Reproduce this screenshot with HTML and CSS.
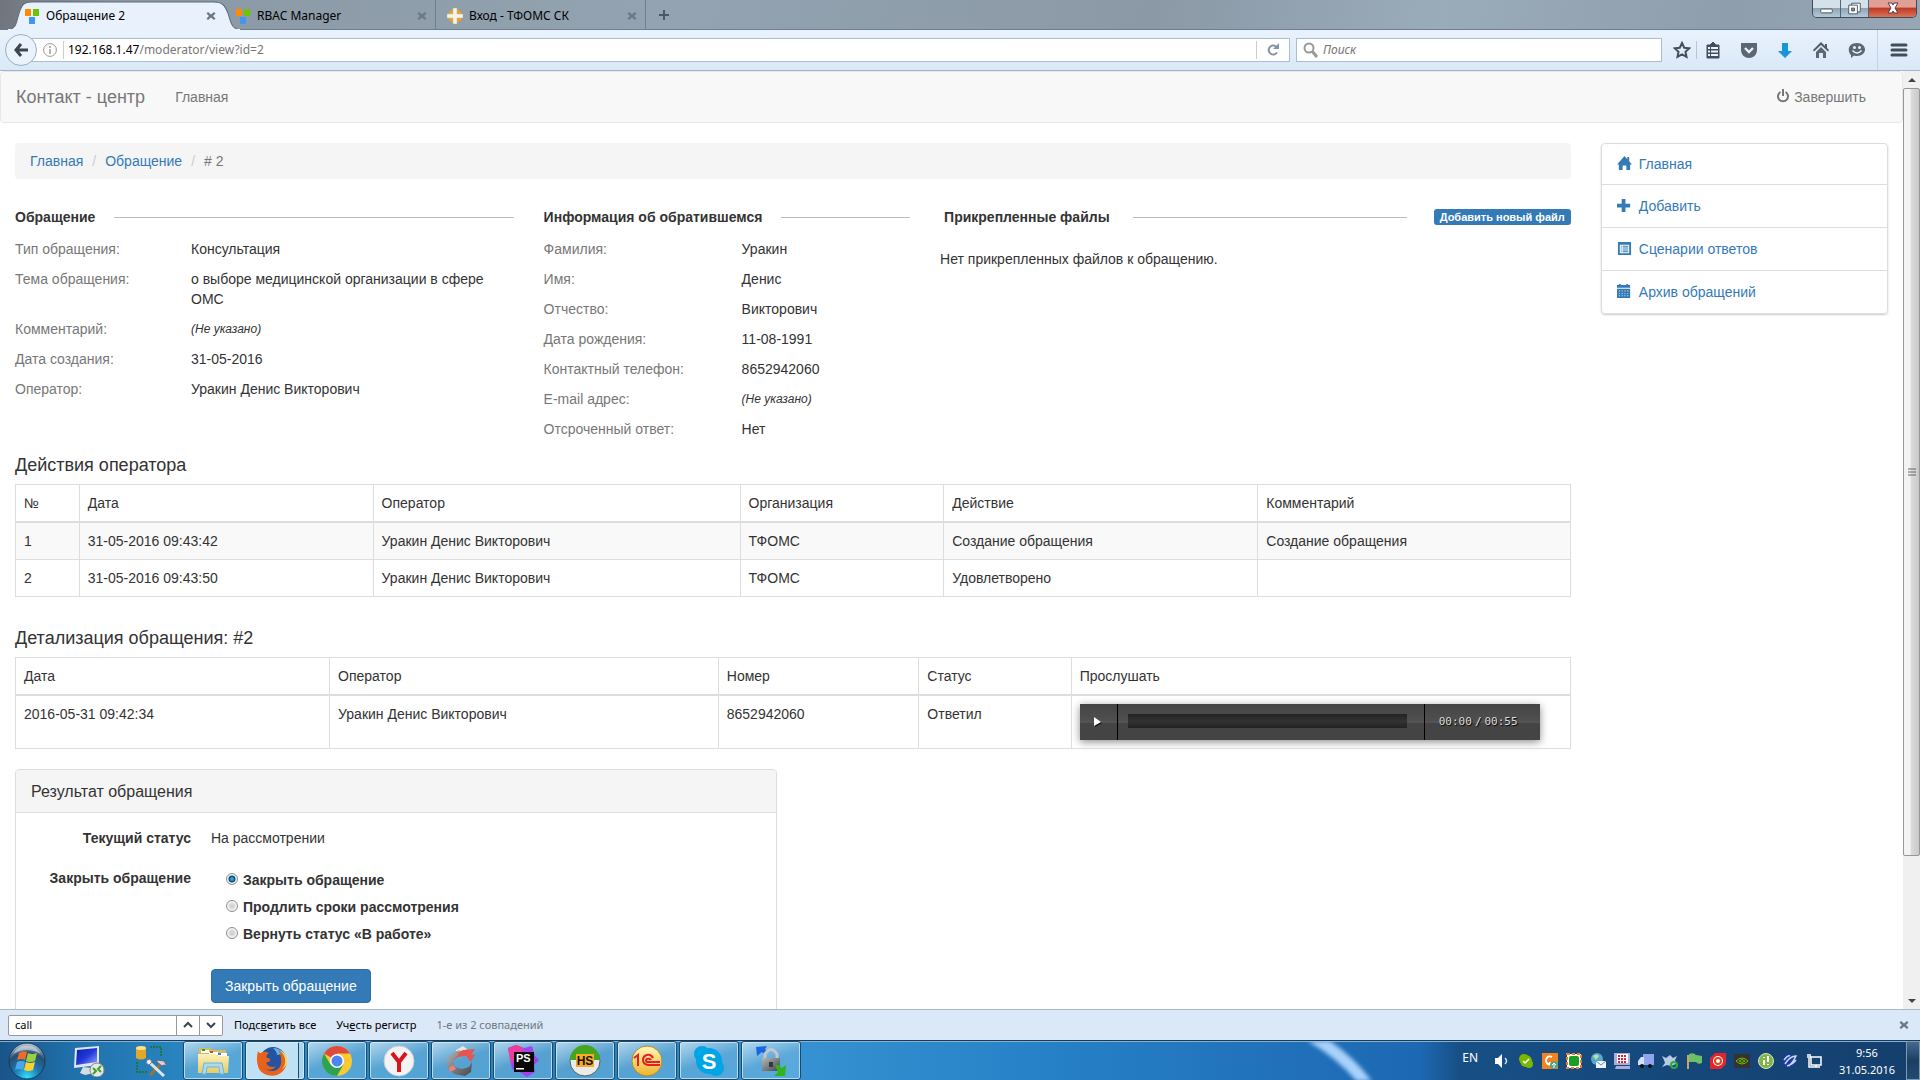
FILE: index.html
```html
<!DOCTYPE html>
<html lang="ru">
<head>
<meta charset="utf-8">
<title>Обращение 2</title>
<link rel="stylesheet" href="styles.css">
</head>
<body>
<svg class="defs" width="0" height="0" aria-hidden="true">
  <defs>
    <linearGradient id="gold" x1="0" y1="0" x2="0" y2="1"><stop offset="0" stop-color="#fff7b8"/><stop offset="1" stop-color="#f0b429"/></linearGradient>
    <linearGradient id="metal" x1="0" y1="0" x2="1" y2="1"><stop offset="0" stop-color="#b5b8ba"/><stop offset="1" stop-color="#42474a"/></linearGradient>
    <radialGradient id="orb" cx=".5" cy=".95" r=".9"><stop offset="0" stop-color="#35e0ff"/><stop offset=".4" stop-color="#1b78b0"/><stop offset=".75" stop-color="#274e70"/><stop offset="1" stop-color="#a9bccb"/></radialGradient>
    <linearGradient id="screen" x1="0" y1="0" x2="1" y2="1"><stop offset="0" stop-color="#0b1ea8"/><stop offset=".5" stop-color="#2238d8"/><stop offset="1" stop-color="#8fa8ff"/></linearGradient>
    <linearGradient id="folder" x1="0" y1="0" x2="0" y2="1"><stop offset="0" stop-color="#fbf2b8"/><stop offset="1" stop-color="#e6cb68"/></linearGradient>
    <symbol id="yii" viewBox="0 0 16 16"><path fill="#ff8a00" d="M1 1h6v7H1z"/><path fill="#6fc400" d="M9 1h6v7H9z"/><path fill="#3f97f0" d="M5 9h6v7H5z"/></symbol>
    <symbol id="cross" viewBox="0 0 10 10"><path d="M2 1 5 3.500 8 1l1.500 1.500L7 5l2.500 2.500L8 9 5 6.500 2 9 .5 7.500 3 5 .5 2.500z" fill="#6b7986"/></symbol>
  </defs>
</svg>

<header class="tabs">
  <div class="tab tab-active">
    <svg class="tab-shape" viewBox="0 0 232 30" preserveAspectRatio="none"><path d="M0 30C10 29 9 22 12 13 15 4 17 2 25 2H205c8 0 11 3 14 11 3 9 3 16 13 17z" fill="#e9f2fc" stroke="#5c6d7b"/><path d="M1 30h230" stroke="#e9f2fc" stroke-width="2"/></svg>
    <svg class="fav" viewBox="0 0 16 16"><use href="#yii"/></svg><span>Обращение 2</span><button class="x" aria-label="Закрыть вкладку"><svg viewBox="0 0 10 10"><use href="#cross"/></svg></button>
  </div>
  <div class="tab">
    <svg class="fav" viewBox="0 0 16 16"><use href="#yii"/></svg><span>RBAC Manager</span><button class="x" aria-label="Закрыть вкладку"><svg viewBox="0 0 10 10"><use href="#cross"/></svg></button>
  </div>
  <div class="tab">
    <svg class="fav" viewBox="0 0 16 16"><circle cx="8" cy="8" r="7" fill="#f0a21e"/><path d="M6 0h4v6h6v4h-6v6H6v-6H0V6h6z" fill="#f5f3ea" stroke="#b9b4a6" stroke-width=".5"/></svg><span>Вход - ТФОМС СК</span><button class="x" aria-label="Закрыть вкладку"><svg viewBox="0 0 10 10"><use href="#cross"/></svg></button>
  </div>
  <button class="new-tab" aria-label="Новая вкладка"><svg viewBox="0 0 12 12"><path d="M6 1v10M1 6h10" stroke="#4a5865" stroke-width="2"/></svg></button>
  <div class="win">
    <button class="wb" aria-label="Свернуть"><svg viewBox="0 0 28 18"><rect x="8" y="9" width="12" height="4" rx="1" fill="#fff" stroke="#4d5967"/></svg></button>
    <button class="wb" aria-label="Восстановить"><svg viewBox="0 0 28 18"><path d="M11 3h9v9h-9z" fill="#fff" stroke="#4d5967"/><path d="M8 5h9v9H8z" fill="#fff" stroke="#4d5967"/><path d="M11 8h3v3h-3z" fill="#7e93a6" stroke="#4d5967"/></svg></button>
    <button class="wb wb-close" aria-label="Закрыть"><svg viewBox="0 0 28 18"><path d="M9 3h4l1 2 1-2h4l-3 5 3 5h-4l-1-2-1 2H9l3-5z" fill="#fff" stroke="#553d42"/></svg></button>
  </div>
</header>

<div class="toolbar">
  <button class="back" aria-label="Назад"><svg viewBox="0 0 16 16"><path d="M8 2 3 8l5 6M3 8h12" fill="none" stroke="#3c4650" stroke-width="3"/></svg></button>
  <div class="url">
    <svg class="info" viewBox="0 0 14 14"><circle cx="7" cy="7" r="6.400" fill="none" stroke="#999"/><path d="M7 6v5M7 3v2" stroke="#999" stroke-width="1.500"/></svg>
    <i class="vline"></i>
    <span class="addr"><b>192.168.1.47</b>/moderator/view?id=2</span>
    <i class="vline"></i>
    <button class="reload" aria-label="Обновить"><svg viewBox="0 0 14 14"><path d="M11 9.500A4.500 4.500 0 1 1 10 3.500" fill="none" stroke="#8795a1" stroke-width="2"/><path d="M7 6h6V0z" fill="#8795a1"/></svg></button>
  </div>
  <div class="search">
    <svg viewBox="0 0 16 16"><circle cx="6" cy="6" r="4.500" fill="none" stroke="#999" stroke-width="2"/><path d="m9 9 5 6" stroke="#999" stroke-width="3"/></svg>
    <input type="text" placeholder="Поиск" aria-label="Поиск">
  </div>
  <div class="tools">
    <button class="tool" aria-label="Закладка"><svg viewBox="0 0 18 18"><path d="m9 2 2.200 4.700 5 .6-3.700 3.500 1 5L9 13.400l-4.500 2.400 1-5L1.800 7.300l5-.6z" fill="none" stroke="#424f5a" stroke-width="2"/></svg></button>
    <i class="tool-sep"></i>
    <button class="tool" aria-label="Меню закладок"><svg viewBox="0 0 18 18"><path d="M3 4h3l3-3 3 3h3v13H3z" fill="#424f5a" stroke="#424f5a" stroke-linejoin="round"/><path d="M4 7h2M7 7h7M4 10.500h2M7 10.500h7M4 14h2M7 14h7" stroke="#e9f2fc" stroke-width="2"/></svg></button>
    <button class="tool" aria-label="Pocket"><svg viewBox="0 0 18 18"><path d="M1 2h16v7c0 5-4 8-8 8s-8-3-8-8z" fill="#5b6772"/><path d="m5 7 4 4 4-4" fill="none" stroke="#e9f2fc" stroke-width="2.400"/></svg></button>
    <button class="tool" aria-label="Загрузки"><svg viewBox="0 0 18 18"><path d="M6 2h6v8h4l-7 7-7-7h4z" fill="#1694dc"/></svg></button>
    <button class="tool" aria-label="Домой"><svg viewBox="0 0 18 18"><path d="M9 1 1 9l1 1.500L9 4l7 6.500L17 9l-2-2V3h-2v2z" fill="#4f5c68"/><path d="m9 6 5 5v6h-3v-5H7v5H4v-6z" fill="#5b6772"/></svg></button>
    <button class="tool" aria-label="Чат"><svg viewBox="0 0 18 18"><path d="M9 2c5 0 8 3 8 6.500S14 15 9 15c-1 0-2 0-3-.5L3 17v-3C-1 10 0 2 9 2z" fill="#5b6772"/><path d="M4.500 9.500q4.500 5 9 0" fill="none" stroke="#e9f2fc" stroke-width="1.500"/><circle cx="6.500" cy="6.500" r="1.500" fill="#e9f2fc"/><circle cx="11.500" cy="6.500" r="1.500" fill="#e9f2fc"/></svg></button>
    <button class="tool menu" aria-label="Меню"><svg viewBox="0 0 18 18"><path d="M2 4h14M2 9h14M2 14h14" stroke="#424f5a" stroke-width="3" stroke-linecap="round"/></svg></button>
  </div>
</div>

<div class="viewport">
  <div class="page">
    <nav class="navbar">
      <a class="brand" href="#">Контакт - центр</a>
      <a class="nav-link" href="#">Главная</a>
      <a class="nav-link logout" href="#"><svg viewBox="0 0 14 14"><path d="M4.500 3A5 5 0 1 0 9.500 3M7 0v7" fill="none" stroke="currentColor" stroke-width="2"/></svg> Завершить</a>
    </nav>
    <div class="layout">
      <main>
        <ol class="crumbs"><li><a href="#">Главная</a></li><li><a href="#">Обращение</a></li><li># 2</li></ol>
        <div class="sections">
          <section>
            <h4 class="legend"><span>Обращение</span></h4>
            <dl class="facts facts-third">
              <dt>Тип обращения:</dt><dd>Консультация</dd>
              <dt>Тема обращения:</dt><dd>о выборе медицинской организации в сфере ОМС</dd>
              <dt>Комментарий:</dt><dd class="none">(Не указано)</dd>
              <dt>Дата создания:</dt><dd>31-05-2016</dd>
              <dt>Оператор:</dt><dd>Уракин Денис Викторович</dd>
            </dl>
          </section>
          <section>
            <h4 class="legend"><span>Информация об обратившемся</span></h4>
            <dl class="facts facts-half">
              <dt>Фамилия:</dt><dd>Уракин</dd>
              <dt>Имя:</dt><dd>Денис</dd>
              <dt>Отчество:</dt><dd>Викторович</dd>
              <dt>Дата рождения:</dt><dd>11-08-1991</dd>
              <dt>Контактный телефон:</dt><dd>8652942060</dd>
              <dt>E-mail адрес:</dt><dd class="none">(Не указано)</dd>
              <dt>Отсроченный ответ:</dt><dd>Нет</dd>
            </dl>
          </section>
          <section>
            <div class="files-head"><h4 class="legend"><span>Прикрепленные файлы</span></h4><a class="badge" href="#">Добавить новый файл</a></div>
            <p class="files">Нет прикрепленных файлов к обращению.</p>
          </section>
        </div>

        <h3 class="title">Действия оператора</h3>
        <table class="grid striped">
          <colgroup><col class="a1"><col class="a2"><col class="a3"><col class="a4"><col class="a5"><col></colgroup>
          <thead><tr><th>№</th><th>Дата</th><th>Оператор</th><th>Организация</th><th>Действие</th><th>Комментарий</th></tr></thead>
          <tbody>
            <tr><td>1</td><td>31-05-2016 09:43:42</td><td>Уракин Денис Викторович</td><td>ТФОМС</td><td>Создание обращения</td><td>Создание обращения</td></tr>
            <tr><td>2</td><td>31-05-2016 09:43:50</td><td>Уракин Денис Викторович</td><td>ТФОМС</td><td>Удовлетворено</td><td></td></tr>
          </tbody>
        </table>

        <h3 class="title title-next">Детализация обращения: #2</h3>
        <table class="grid">
          <colgroup><col class="b1"><col class="b2"><col class="b3"><col class="b4"><col></colgroup>
          <thead><tr><th>Дата</th><th>Оператор</th><th>Номер</th><th>Статус</th><th>Прослушать</th></tr></thead>
          <tbody><tr><td>2016-05-31 09:42:34</td><td>Уракин Денис Викторович</td><td>8652942060</td><td>Ответил</td>
            <td><div class="player">
              <button class="play" aria-label="Воспроизвести"><svg viewBox="0 0 8 10"><path d="m1 2 7 4-7 4z" fill="#111"/><path d="m0 0 7 5-7 4z" fill="#fff"/></svg></button>
              <div class="seek"><i></i></div>
              <div class="time"><span>00:00</span><span>/</span><span>00:55</span></div>
            </div></td></tr></tbody>
        </table>

        <form class="panel">
          <div class="panel-head">Результат обращения</div>
          <div class="panel-body">
            <b class="lab">Текущий статус</b><span>На рассмотрении</span>
            <b class="lab">Закрыть обращение</b>
            <div class="radios">
              <label><input type="radio" name="r" checked>Закрыть обращение</label>
              <label><input type="radio" name="r">Продлить сроки рассмотрения</label>
              <label><input type="radio" name="r">Вернуть статус «В работе»</label>
            </div>
            <button class="primary" type="button">Закрыть обращение</button>
          </div>
        </form>
      </main>
      <aside>
        <ul class="side">
          <li><a href="#"><svg viewBox="0 0 16 16"><path d="M8 0 0 9h2v6h4v-5h4v5h4V9h2l-3-3.500V1h-2v2.500z" fill="currentColor"/></svg>Главная</a></li>
          <li><a href="#"><svg viewBox="0 0 16 16"><path d="M5 1h4v5h5v4H9v5H5v-5H0V6h5z" fill="currentColor"/></svg>Добавить</a></li>
          <li><a href="#"><svg viewBox="0 0 16 16"><path d="M1 1h14v14H1zM3 4v9h10V4zM4 5h1v1H4zm2 0h6v1H6zM4 7h1v1H4zm2 0h6v1H6zM4 9h1v1H4zm2 0h6v1H6zm-2 2h1v1H4zm2 0h6v1H6z" fill="currentColor" fill-rule="evenodd"/></svg>Сценарии ответов</a></li>
          <li><a href="#"><svg viewBox="0 0 16 16"><path d="M0 1h2V0h2v1h6V0h2v1h2v3H0zM0 5h14v10H0zM2 7v1h1V7zm3 0v1h1V7zm3 0v1h1V7zm3 0v1h1V7zM2 9.500v1h1v-1zm3 0v1h1v-1zm3 0v1h1v-1zm3 0v1h1v-1zM2 12v1h1v-1zm3 0v1h1v-1zm3 0v1h1v-1zm3 0v1h1v-1z" fill="currentColor" fill-rule="evenodd"/></svg>Архив обращений</a></li>
        </ul>
      </aside>
    </div>
  </div>
  <div class="scroll">
    <svg class="arrow" viewBox="0 0 17 17"><path d="m5 11 4-4 4 4z" fill="#444"/></svg>
    <div class="track"><div class="thumb"><svg viewBox="0 0 8 8"><path d="M0 1h8M0 4h8M0 7h8" stroke="#666"/></svg></div></div>
    <svg class="arrow" viewBox="0 0 17 17"><path d="m5 7 4 4 4-4z" fill="#444"/></svg>
  </div>
</div>

<div class="find">
  <div class="find-box">
    <input type="text" value="call" aria-label="Найти на странице">
    <button aria-label="Предыдущее"><svg viewBox="0 0 10 10"><path d="m1 7 4-4 4 4" fill="none" stroke="#3c4650" stroke-width="2"/></svg></button>
    <button aria-label="Следующее"><svg viewBox="0 0 10 10"><path d="m1 3 4 4 4-4" fill="none" stroke="#3c4650" stroke-width="2"/></svg></button>
  </div>
  <button class="find-opt"><span>Подс<u>в</u>етить все</span></button>
  <button class="find-opt"><span>Уч<u>е</u>сть регистр</span></button>
  <span class="found">1-е из 2 совпадений</span>
  <button class="x find-close" aria-label="Закрыть поиск"><svg viewBox="0 0 10 10"><use href="#cross"/></svg></button>
</div>

<footer class="taskbar">
  <svg class="streak" viewBox="0 0 100 40"><path d="M5-5Q40 15 62 45" fill="none" stroke="#a9d2fb" stroke-width="12"/></svg>
  <button class="pin start" aria-label="Пуск"><svg viewBox="0 0 38 38"><circle cx="19" cy="19" r="18" fill="url(#orb)" stroke="#173b5b"/><path d="M11 11q4-3 8-1l-2 8q-4-2-8 0z" fill="#f06a2a"/><path d="M20 11q4 2 9 0l-2 8q-5 2-9 0z" fill="#9bcf3c"/><path d="M9 20q4-2 8 0l-2 8q-4-2-8 0z" fill="#4aa8ea"/><path d="M18 20q4 2 9 0l-2 8q-5 2-9 0z" fill="#ffd02e"/><path d="M5 12a16 16 0 0 1 28 0Q19 4 5 12z" fill="#fff" opacity=".45"/></svg></button>
  <button class="pin" aria-label="Удалённый рабочий стол"><svg viewBox="0 0 32 32"><path d="m10 22 9 1 2 5-9 2-5-2z" fill="#d7dde2"/><path d="M2 3 26 1v19L1 23z" fill="#dfe6ec"/><path d="m4 5 20-2v14L3 20z" fill="url(#screen)"/><circle cx="24" cy="25" r="7" fill="#e6e8ea" stroke="#888"/><path d="m20 23 3 3-3 3M28 21l-3 3 3 3" fill="none" stroke="#37a522" stroke-width="2"/></svg></button>
  <button class="pin" aria-label="Средства разработки"><svg viewBox="0 0 32 32"><path d="M1 3v10q5 3 10 0V3z" fill="#e2a928"/><ellipse cx="6" cy="3" rx="5" ry="2" fill="#ffe08a"/><path d="M15 2h11v10M2 17v10h11" fill="none" stroke="#17780d" stroke-width="1.500" stroke-dasharray="2 1"/><path d="m15 30 13-13" stroke="#9c7330" stroke-width="3"/><path d="m22 15 7 1 3 5-3-1-2 1-5-4z" fill="#cfd5da" stroke="#667"/><path d="m13 16 16 15" stroke="#dfe3e6" stroke-width="3"/><path d="m11 18 1-3 3-1 2 3-3 3z" fill="#eef" stroke="#778"/></svg></button>
  <button class="task" aria-label="Проводник"><svg viewBox="0 0 32 32"><path d="M2 3h11l2 2h14v22H2z" fill="#d9bc5a"/><path d="M4 5h8v3H4z" fill="#fff"/><path d="M5 4h3v2H5z" fill="#22a33a"/><path d="M12 7h9v3h-9z" fill="#fff"/><path d="M13 6h3v2h-3z" fill="#d8482e"/><path d="M1 9h18l2 2h11l-1 17H1z" fill="url(#folder)"/><path d="M21 8h9v3h-9z" fill="#fff"/><path d="M21 8h3v2h-3z" fill="#2587df"/><path d="M5 29 7 18h18l2 11h-4l-1-7H10l-1 7z" fill="#a9dbf2" stroke="#71b1d3"/></svg></button>
  <button class="task task-stack" aria-label="Firefox"><svg viewBox="0 0 32 32"><circle cx="17" cy="15" r="13" fill="#24539f"/><path d="M17 3c7 0 11 5 11 9-2-3-5-3-7-2 0-3-2-5-4-7z" fill="#5ab7e6"/><path d="M2 6c1 2 2 2 3 2 3-2 6-1 8 0-2 1-3 3-2 5 2 0 4 1 3 3-1 1-3 1-4 2 2 4 7 5 10 3-2 4-8 5-11 2 5 6 18 3 16-9 0-3-1-6-3-9 9 5 11 15 5 21-6 7-19 6-24-2C1 19 0 13 2 6z" fill="#e8621b"/><path d="M24 5c6 6 7 14 2 19 7-3 7-14-2-19z" fill="#ffd84a"/></svg></button>
  <button class="task" aria-label="Chrome"><svg viewBox="0 0 32 32"><circle cx="16" cy="16" r="15" fill="#fbc932"/><path d="M16 16 3 8.500A15 15 0 0 1 29 8.500H16z" fill="#dc4b3e"/><path d="M3 8.500A15 15 0 0 0 16 31l6.500-11.500L16 16 9.500 19.500z" fill="#2da253"/><circle cx="16" cy="16" r="7" fill="#fff"/><circle cx="16" cy="16" r="5.500" fill="#4a86ee"/></svg></button>
  <button class="task" aria-label="Яндекс"><svg viewBox="0 0 32 32"><circle cx="16" cy="16" r="15" fill="#f3f3f3" stroke="#c9cfd3"/><path d="m9 8 7 9 7-9M16 16v11" fill="none" stroke="#d8141c" stroke-width="4"/></svg></button>
  <button class="task" aria-label="Clarify"><svg viewBox="0 0 32 32"><path d="m11 5 7-4 4 3-4 6-8 1z" fill="#e9e6e6"/><path d="m9 9 9-4 12-1-4 6 4-1-4 8-5-6-8 1-5 4z" fill="#e4564f"/><path d="m9 7 6-2-2 5-5 6 2 6 7 2 7-2 3-5-1 10-6 4-11-2-6-6-2-8z" fill="url(#metal)"/><path d="m4 23 4-3 3 4-6 3z" fill="#ef7f78"/></svg></button>
  <button class="task" aria-label="PhpStorm"><svg viewBox="0 0 32 32"><path d="M1 3 9 0l8 3 8-2 3 10 4 4-5 5 1 7-8 5-9-6-6-2z" fill="#a042ed"/><path d="M1 3 9 0l8 3-13 16z" fill="#ef3c9c"/><path d="M7 7h20v20H7z" fill="#080808"/><text x="9" y="17" class="logo-ps">PS</text><path d="M9 23h8v1.500H9z" fill="#fff"/></svg></button>
  <button class="task" aria-label="HeidiSQL"><svg viewBox="0 0 32 32"><circle cx="16" cy="16" r="15" fill="#e8ece8" stroke="#56645a"/><path d="M1 15a15 15 0 0 1 30 0z" fill="#46a51c"/><path d="M7 9h18v13H7z" fill="#f8aa28"/><text x="16" y="20" class="logo-hs">HS</text></svg></button>
  <button class="task" aria-label="1С"><svg viewBox="0 0 32 32"><circle cx="16" cy="16" r="15" fill="url(#gold)" stroke="#b08a31"/><path d="m3 13 4-3v11M22 13q-2-4-6-3-4 1-4 5t5 5h12M20 15q-1-2-4-1-2 2 0 3h13" fill="none" stroke="#e5202b" stroke-width="2"/></svg></button>
  <button class="task" aria-label="Skype"><svg viewBox="0 0 32 32"><circle cx="16" cy="16" r="13" fill="#00a5e5"/><circle cx="9" cy="9" r="8" fill="#00a5e5"/><circle cx="23" cy="23" r="8" fill="#00a5e5"/><text x="16" y="24" class="logo-s">S</text></svg></button>
  <button class="task" aria-label="WinSCP"><svg viewBox="0 0 32 32"><path d="M1 2 12 1l-2 3 3 3-3 3-3-3-5 4z" fill="#1768df"/><path d="M10 15V9q6-9 12 0v6" fill="none" stroke="#c4c8ca" stroke-width="3"/><path d="M7 13h18v13H7z" fill="url(#metal)"/><path d="M14 17h4v5h-4z" fill="#33383b"/><path d="M20 20h4l3 3 4-3-1 11H19l4-4z" fill="#2eb51d"/></svg></button>
  <div class="tray">
    <span class="lang">EN</span>
    <svg viewBox="0 0 16 16"><path d="M1 5h3l4-4v14l-4-4H1z" fill="#fff"/><path d="M11 5q3 3 0 6" fill="none" stroke="#cfe0ee" stroke-width="1.500"/></svg>
    <svg viewBox="0 0 16 16"><circle cx="6" cy="6" r="5" fill="#7ab800"/><circle cx="8" cy="8" r="6" fill="#7ab800"/><circle cx="11" cy="11" r="4" fill="#7ab800"/><path d="m5 8 2 2 4-4" fill="none" stroke="#fff" stroke-width="1.500"/></svg>
    <svg viewBox="0 0 16 16"><path d="M0 0h16v16H0z" fill="#f58220"/><path d="M10 4a4 4 0 1 0 1 6H7" fill="none" stroke="#fff" stroke-width="2"/><circle cx="12" cy="12" r="4" fill="#5aa57c"/><path d="M12 15v-4m-2 1 2-2 2 2" fill="none" stroke="#fff"/></svg>
    <svg viewBox="0 0 16 16"><path d="M1 1h14v14H1z" fill="#fff" stroke="#ef7c22" stroke-width="2" stroke-dasharray="3 2"/><rect x="3" y="3" width="10" height="10" rx="2" fill="#1a9c26"/></svg>
    <svg viewBox="0 0 16 16"><circle cx="7" cy="6" r="6" fill="#58a9cc"/><path d="M3 3q4-3 6 0L6 7z" fill="#b9e2a9"/><path d="M6 8h10v7H6z" fill="#eef5fb"/><path d="m6 8 5 4 5-4" fill="none" stroke="#5b94c7"/></svg>
    <svg viewBox="0 0 16 16"><path d="M0 0h16v12H0zM2 13h14v3H1z" fill="#a9afd9"/><path d="M3 1h11v9H3z" fill="#fff"/><path d="M4 3h9M4 6h9M4 9h9" stroke="#d3243a" stroke-width="2" stroke-dasharray="2 1"/></svg>
    <svg viewBox="0 0 16 16"><path d="M5 1h11v11H5z" fill="#8fa4ef"/><path d="M0 8l3-4h3v8H0z" fill="#d7def8"/><circle cx="4" cy="13" r="2" fill="#111"/><circle cx="12" cy="13" r="2" fill="#111"/></svg>
    <svg viewBox="0 0 16 16"><path d="m0 3 4 2 4-3 3 3 4-2-2 4 1 4-5 2-4-1-5 2 3-4-1-3z" fill="#b9cbe3"/><circle cx="12" cy="12" r="3" fill="none" stroke="#2fac34" stroke-width="2"/></svg>
    <svg viewBox="0 0 16 16"><path d="M1 2h2v14H1z" fill="#c9a36a"/><path d="M3 1q5-2 7 1l6 1v7q-4 2-6-1H3z" fill="#6cc067"/></svg>
    <svg viewBox="0 0 16 16"><path d="M5 0h11v11l-5 5H0V5z" fill="#e1252b"/><circle cx="8" cy="8" r="5" fill="#fff"/><circle cx="8" cy="8" r="3" fill="none" stroke="#e1461f" stroke-width="2"/></svg>
    <svg viewBox="0 0 16 16"><path d="M0 1h16v14H0z" fill="#333"/><path d="M2 8q6-6 12 0-6 6-12 0zm3 0q3-3 6 0-3 3-6 0z" fill="none" stroke="#77b900"/></svg>
    <svg viewBox="0 0 16 16"><circle cx="8" cy="8" r="7.500" fill="#7fb545" stroke="#dbe7c8"/><path d="M6 7v5M10 3v6M6 4v1M10 11v1" stroke="#fff" stroke-width="2"/></svg>
    <svg viewBox="0 0 16 16"><circle cx="7" cy="8" r="7" fill="#1c3b9d"/><path d="M2 7q4-5 6-4M3 11q5-8 11-8-2 5-7 10M5 13q6-2 9-6" fill="none" stroke="#c9d7f2" stroke-width="1.500"/></svg>
    <svg viewBox="0 0 16 16"><path d="M5 4h10v8H5zM6 14h8M10 12v2M2 1v4m2-4v4M3 5v9h3" fill="none" stroke="#fff" stroke-width="1.500"/></svg>
  </div>
  <div class="clock"><span>9:56</span><span>31.05.2016</span></div>
  <button class="desk" aria-label="Свернуть все окна"></button>
</footer>
</body>
</html>
```

FILE: styles.css
```css
* { box-sizing: border-box; }
body { margin: 0; height: 100vh; display: flex; flex-direction: column; overflow: hidden; font: 14px/20px "Liberation Sans", Arial, sans-serif; color: #333; background: #fff; }
button, input { font: inherit; color: inherit; margin: 0; }
button { border: 0; padding: 0; background: none; display: flex; align-items: center; justify-content: center; }
a { color: #337ab7; text-decoration: none; }
.defs { position: absolute; }
.tabs, .toolbar, .find { font: 12px/16px "Noto Sans", "Open Sans", sans-serif; color: #000; }

/* Browser frame */
.tabs { display: flex; flex: none; height: 30px; padding-left: 13px; background: linear-gradient(100deg, #70757c 0, #8a98a4 6%, #94a3b1 35%, #8b99a6 60%, #9aabba 75%, #8f9eac 90%, #98a7b5 100%); border-bottom: 1px solid #6b7f90; }
.tab { position: relative; flex: 0 1 211px; display: flex; align-items: center; padding: 2px 6px 0 11px; gap: 6px; }
.tab span { flex: 1; white-space: nowrap; position: relative; }
.tab .fav { width: 16px; height: 16px; position: relative; }
.tab + .tab:not(:nth-child(2)) { border-left: 1px solid #6f7f8d; }
.tab:nth-child(3) { border-right: 1px solid #6f7f8d; }
.tab-shape { position: absolute; left: -6px; top: 0; width: 234px; height: 30px; }
.x { width: 14px; height: 14px; position: relative; }
.x svg { width: 10px; height: 10px; }
.new-tab { width: 36px; }
.new-tab svg { width: 12px; height: 12px; }
.win { display: flex; margin-left: auto; margin-right: 3px; height: 18px; border: 1px solid #3f4b57; border-top: 0; border-radius: 0 0 5px 5px; overflow: hidden; }
.wb { width: 28px; background: linear-gradient(#d4e0ea 45%, #8fa5b7 50%, #b5c9d8); border-right: 1px solid #56646f; }
.wb svg { width: 28px; height: 18px; }
.wb-close { width: 47px; border: 0; background: linear-gradient(#e0a095 40%, #c13a26 50%, #d9745c); }
.toolbar { display: flex; flex: none; align-items: center; height: 41px; padding: 0 5px; background: linear-gradient(#e9f2fc, #dae8f8); border-bottom: 1px solid #9fb6cd; }
.back { position: relative; z-index: 1; width: 32px; height: 32px; margin-right: -8px; border: 1px solid #9aafc4; border-radius: 50%; background: #eaf2fb; }
.back svg { width: 16px; height: 16px; }
.url, .search { display: flex; align-items: center; height: 24px; background: #fff; border: 1px solid #a9bed3; }
.url { flex: 1; padding-left: 13px; }
.info { width: 14px; height: 14px; margin-right: 6px; }
.vline { width: 1px; height: 18px; background: #ccc; }
.addr { flex: 1; padding-left: 4px; color: #777; }
.addr b { font-weight: 400; color: #000; }
.reload { width: 32px; }
.reload svg { width: 14px; height: 14px; }
.search { flex: 0 1 366px; margin-left: 6px; padding-left: 6px; gap: 4px; }
.search svg { width: 16px; height: 16px; }
.search input { flex: 1; min-width: 0; border: 0; padding: 0; background: none; outline: 0; }
.search input::placeholder { color: #757575; font-style: italic; opacity: 1; }
.tools { display: flex; align-items: center; margin-left: 8px; }
.tool { width: 36px; height: 40px; flex: none; }
.tool svg { width: 18px; height: 18px; }
.tool:first-child { width: 24px; }
.tool-sep { width: 1px; height: 18px; margin-left: 2px; background: #b3c5d6; }
.tool-sep + .tool { margin-left: -2px; }
.menu { width: 43px; margin-left: 2px; margin-right: -5px; border-left: 1px solid #c3d3e3; }

/* Application page */
.viewport { flex: 1; min-height: 0; display: flex; overflow: hidden; }
.page { flex: 1; min-width: 0; overflow: hidden; }
.navbar { display: flex; align-items: center; height: 52px; margin-bottom: 20px; padding: 0 36px 0 15px; background: #f8f8f8; border: 1px solid #e7e7e7; border-radius: 4px; }
.navbar a { color: #777; }
.brand { font-size: 18px; margin-right: 30px; }
.logout { margin-left: auto; }
.logout svg { width: 14px; height: 14px; vertical-align: -1px; }
.layout { display: grid; grid-template-columns: 5fr 1fr; align-items: start; }
main, aside { padding: 0 15px; min-width: 0; }
.crumbs { display: flex; list-style: none; margin: 0 0 28px; padding: 8px 15px; background: #f5f5f5; border-radius: 4px; color: #777; }
.crumbs li + li::before { content: "/"; color: #ccc; padding: 0 9px; }
.sections { display: grid; grid-template-columns: 4fr 3fr 5fr; margin: 0 -15px 16px; }
.sections section { padding: 0 15px; }
.legend { display: flex; flex: 1; align-items: center; gap: 19px; margin: 0; font-size: 14px; line-height: 20px; }
.legend::after { content: ""; flex: 1; height: 1px; background: #bbb; }
.facts { display: grid; row-gap: 10px; margin: 12px 0 0; }
.facts-third { grid-template-columns: 176px 1fr; }
.facts-half { grid-template-columns: 198px 1fr; }
.facts dt { color: #777; }
.facts dd { margin: 0; }
.facts .none { font-size: 12px; font-style: italic; }
.files-head { display: flex; align-items: center; gap: 27px; padding-left: 4px; }
.files-head .legend { gap: 23px; }
.badge { padding: 0 6px; height: 16px; font-size: 11px; line-height: 16px; font-weight: 700; color: #fff; background: #337ab7; border-radius: 3px; }
.files { margin: 22px 0 0; }
.title { margin: 0 0 9px; font-size: 18px; line-height: 20px; font-weight: 400; }
.title-next { margin-top: 31px; }
.grid { width: 100%; table-layout: fixed; border-collapse: collapse; }
.grid th, .grid td { padding: 8px; border: 1px solid #ddd; text-align: left; font-weight: 400; vertical-align: top; }
.grid th { border-bottom-width: 2px; }
.striped tbody tr:first-child { background: #f9f9f9; }
.a1 { width: 4.1%; } .a2 { width: 18.9%; } .a3 { width: 23.6%; } .a4 { width: 13.1%; } .a5 { width: 20.2%; }
.b1 { width: 20.2%; } .b2 { width: 25%; } .b3 { width: 12.9%; } .b4 { width: 9.8%; }
.player { display: flex; max-width: 460px; height: 36px; background: linear-gradient(#444, #505050 48%, #5c5c5c 50%, #444 54%); box-shadow: 0 2px 8px rgba(0, 0, 0, .45); }
.play { width: 38px; border-right: 1px solid #000; }
.play svg { width: 8px; height: 10px; }
.seek { flex: 1; display: flex; align-items: center; padding: 0 17px 2px 10px; }
.seek i { flex: 1; height: 14px; background: linear-gradient(#222, #333 50%, #222); }
.time { width: 116px; display: flex; justify-content: center; align-items: center; gap: 3px; padding-right: 8px; border-left: 1px solid #000; font: 11px/16px "DejaVu Sans Mono", monospace; color: #ddd; text-shadow: 1px 1px 1px #000; }
.panel { width: 49%; margin-top: 20px; border: 1px solid #ddd; border-radius: 4px; overflow: hidden; }
.panel-head { padding: 12px 15px 10px; font-size: 16px; line-height: 20px; background: #f5f5f5; border-bottom: 1px solid #ddd; }
.panel-body { display: grid; grid-template-columns: 160px 1fr; column-gap: 20px; row-gap: 20px; padding: 15px; justify-items: start; }
.lab { justify-self: end; }
.radios { display: flex; flex-direction: column; gap: 7px; padding: 2px 0 0 15px; }
.radios label { display: flex; align-items: center; gap: 5px; font-weight: 700; }
.radios input { appearance: none; width: 12px; height: 12px; margin-top: -2px; border: 1px solid #8e8f8f; border-radius: 50%; background: radial-gradient(circle, #d5d5d5 2px, #eee 4px); box-shadow: inset 0 0 0 1px #f5f5f5; }
.radios input:checked { background: radial-gradient(circle, #2aa9dd 1px, #123e66 3px, #dde9f0 4px); }
.primary { grid-column: 2; height: 34px; margin: 5px 0 20px; padding: 0 13px; border: 1px solid #2e6da4; border-radius: 4px; background: #337ab7; color: #fff; }
.side { list-style: none; margin: 0; padding: 0; border: 1px solid #ddd; border-radius: 4px; box-shadow: 0 1px 2px rgba(0, 0, 0, .2); }
.side li + li { border-top: 1px solid #ddd; }
.side a { display: flex; align-items: center; gap: 7px; height: 42px; padding-left: 15px; }
.side li:first-child a { height: 40px; }
.side svg { width: 15px; height: 15px; margin-bottom: 2px; }
.scroll { flex: 0 0 17px; display: flex; flex-direction: column; background: #f0f0f0; }
.arrow { flex: none; width: 17px; height: 17px; }
.track { flex: 1; }
.thumb { height: 85%; display: flex; align-items: center; justify-content: center; border: 1px solid #979797; border-radius: 2px; background: linear-gradient(90deg, #f3f3f3 40%, #dadada 50%, #c9c9c9); }
.thumb svg { width: 8px; height: 8px; }

/* Find bar */
.find { display: flex; flex: none; align-items: center; height: 31px; padding: 0 9px 0 8px; background: #dae8f8; border-top: 1px solid #a9b8c6; font-size: 11px; }
.find-box { display: flex; height: 21px; margin-right: 11px; border: 1px solid #999; border-radius: 2px; background: #fff; }
.find-box input { width: 167px; border: 0; padding: 0 6px; background: none; outline: 0; }
.find-box button { width: 23px; border-left: 1px solid #999; }
.find-box svg { width: 10px; height: 10px; }
.find-opt { margin-right: 20px; }
.found { color: #6f7780; }
.find-close { margin-left: auto; }

/* Taskbar */
.taskbar { position: relative; display: flex; flex: none; height: 40px; border-top: 1px solid #1d3954; box-shadow: inset 0 1px #7fb4da; background: linear-gradient(90deg, #1a5488 0, #2072ac 4%, #2c8cc9 12%, #2a7fba 30%, #3591d1 42%, #2680c6 55%, #1d68b2 74%, #174f85 76%, #143f6d 100%); overflow: hidden; }
.pin { width: 62px; }
.pin svg, .task svg { width: 32px; height: 32px; }
.pin.start { width: 54px; margin-right: 4px; }
.start svg { width: 38px; height: 38px; }
.task { width: 60px; margin-right: 2px; border: 1px solid #1c4a6d; border-radius: 3px; box-shadow: inset 0 0 0 1px rgba(220, 242, 255, .7); background: linear-gradient(160deg, rgba(225, 243, 252, .75), rgba(140, 200, 232, .45) 50%, rgba(120, 195, 235, .5)); }
.start + .pin + .pin + .task { margin-left: 1px; }
.task-stack { padding-right: 6px; background: linear-gradient(90deg, rgba(230, 246, 255, .8) 90%, #1c4a6d 90%, #1c4a6d 92%, #a9d6ee 92%); }
.logo-ps { font: 700 11px "Liberation Sans", sans-serif; fill: #fff; }
.logo-hs { font: 700 12px "Liberation Sans", sans-serif; fill: #111; text-anchor: middle; }
.logo-s { font: 700 22px "Liberation Sans", sans-serif; fill: #fff; text-anchor: middle; }
.streak { position: absolute; left: 68%; top: 0; width: 100px; height: 40px; filter: blur(2px); }
.tray { position: relative; display: flex; align-items: center; gap: 8px; margin-left: auto; font: 12px/16px "Noto Sans", sans-serif; color: #fff; }
.tray svg { width: 16px; height: 16px; }
.lang { margin-right: 8px; padding-bottom: 6px; }
.clock { display: flex; flex-direction: column; justify-content: center; align-items: center; width: 80px; margin: 0 2px; padding-left: 6px; font: 11px/17px "Noto Sans", sans-serif; color: #fff; }
.desk { width: 14px; border: 1px solid #7d9bb5; background: linear-gradient(#466a8e, #1c3e63 50%, #244a72); }
```
